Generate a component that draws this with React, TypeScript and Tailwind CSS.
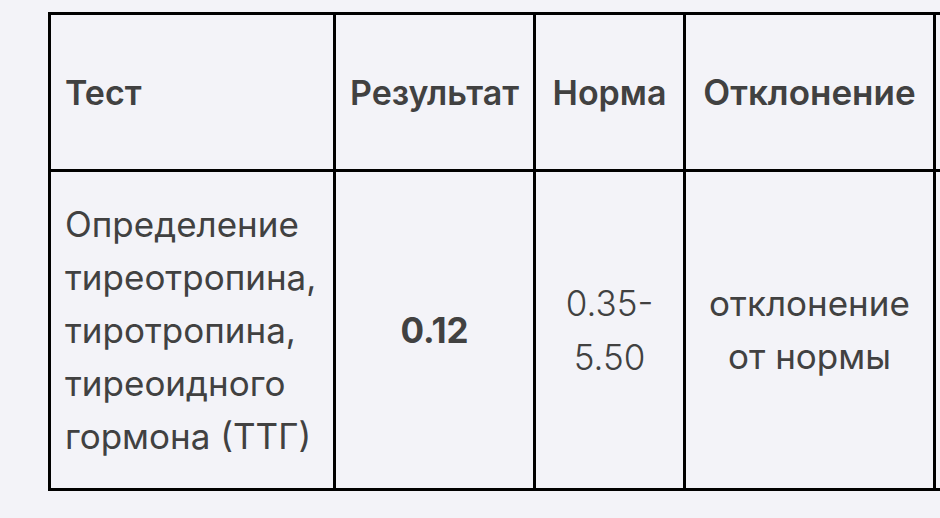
import React from "react";

const font = { fontFamily: "Inter, 'Noto Sans', sans-serif" };

export default function App() {
  return (
    <div
      className="w-[940px] h-[518px] overflow-hidden bg-[#f3f3f8] pt-[12px] pl-[48px] text-[#414141]"
      style={font}
    >
      <div className="grid w-max grid-cols-[285px_200px_150px_250px_200px] grid-rows-[157px_319px] border-l-[3px] border-t-[3px] border-black">
        {/* header */}
        <div className="flex items-center border-r-[3px] border-b-[3px] border-black pl-[14px] pr-4 text-[34px] font-semibold">
          Тест
        </div>
        <div className="flex items-center justify-center border-r-[3px] border-b-[3px] border-black px-4 text-[34px] font-semibold">
          Результат
        </div>
        <div className="flex items-center justify-center border-r-[3px] border-b-[3px] border-black px-4 text-[34px] font-semibold">
          Норма
        </div>
        <div className="flex items-center justify-center border-r-[3px] border-b-[3px] border-black px-4 text-[35px] font-semibold">
          Отклонение
        </div>
        <div className="border-r-[3px] border-b-[3px] border-black" />

        {/* body */}
        <div className="flex items-center border-r-[3px] border-b-[3px] border-black pl-[14px] pr-4 text-[35px] leading-[53px]">
          <span>
            Определение
            <br />
            тиреотропина,
            <br />
            тиротропина,
            <br />
            тиреоидного
            <br />
            гормона (ТТГ)
          </span>
        </div>
        <div className="flex items-center justify-center border-r-[3px] border-b-[3px] border-black px-4 text-[35px] font-bold leading-[53px]">
          0.12
        </div>
        <div className="flex items-center justify-center border-r-[3px] border-b-[3px] border-black px-4 text-center text-[35px] font-light leading-[54px]">
          <span>
            0.35-
            <br />
            5.50
          </span>
        </div>
        <div className="flex items-center justify-center border-r-[3px] border-b-[3px] border-black px-4 text-center text-[35px] leading-[53px]">
          <span>
            отклонение
            <br />
            от нормы
          </span>
        </div>
        <div className="border-r-[3px] border-b-[3px] border-black" />
      </div>
    </div>
  );
}
